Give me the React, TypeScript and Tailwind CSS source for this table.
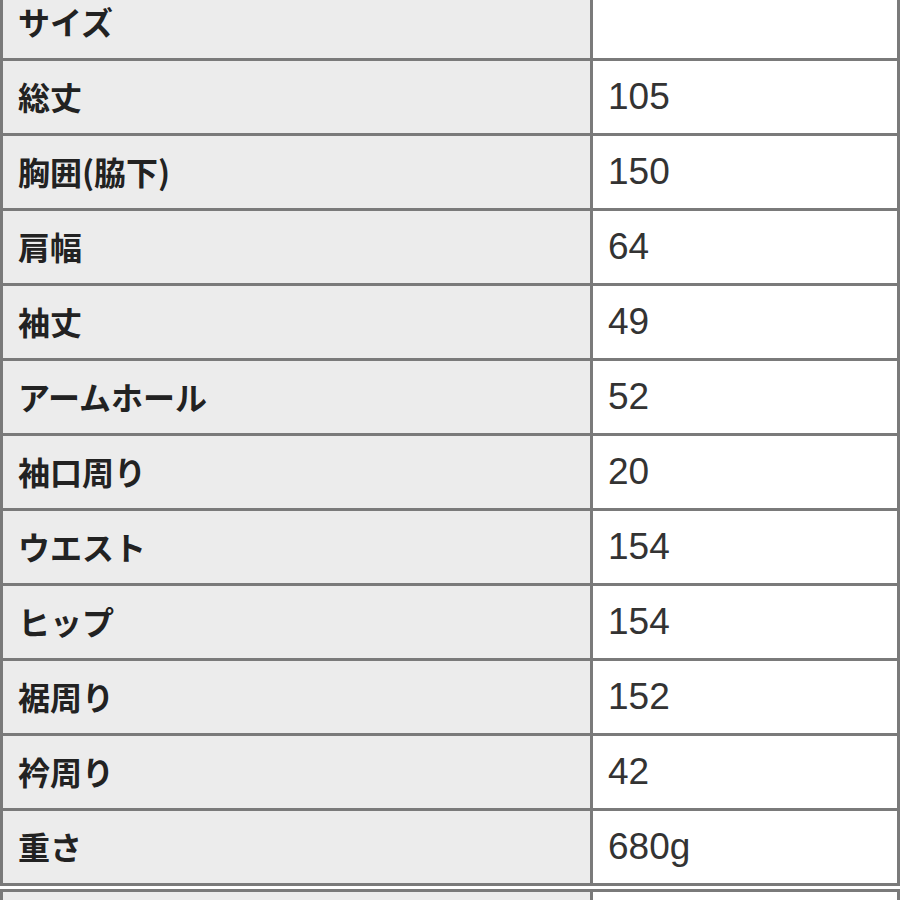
import React from "react";

const rows: [string, string][] = [
  ["サイズ", ""],
  ["総丈", "105"],
  ["胸囲(脇下)", "150"],
  ["肩幅", "64"],
  ["袖丈", "49"],
  ["アームホール", "52"],
  ["袖口周り", "20"],
  ["ウエスト", "154"],
  ["ヒップ", "154"],
  ["裾周り", "152"],
  ["衿周り", "42"],
  ["重さ", "680g"],
];

export default function App() {
  return (
    <div className="w-[900px] h-[900px] overflow-hidden bg-white">
      <div className="-mt-[14px] border-l-[3px] border-r-[3px] border-[#7a7a7a] w-[900px]">
        {rows.map(([k, v], i) => (
          <div key={i} className="flex h-[75px] border-b-[3px] border-[#7a7a7a]">
            <div
              className="w-[590px] bg-[#ececec] border-r-[3px] border-[#7a7a7a] flex items-center pl-[15px] pb-[2px] text-[32px] font-bold text-[#222]"
              style={{ fontFamily: '"Noto Sans CJK JP", sans-serif' }}
            >
              {k}
            </div>
            <div
              className="flex-1 flex items-center pl-[15px] text-[37px] text-[#333]"
              style={{ fontFamily: '"Liberation Sans", "Noto Sans CJK JP", sans-serif' }}
            >
              {v}
            </div>
          </div>
        ))}
      </div>
      <div className="mt-[3px] border-l-[3px] border-r-[3px] border-t-[3px] border-[#7a7a7a] w-[900px] flex h-[40px]">
        <div className="w-[590px] bg-[#ececec] border-r-[3px] border-[#7a7a7a]" />
        <div className="flex-1" />
      </div>
    </div>
  );
}
